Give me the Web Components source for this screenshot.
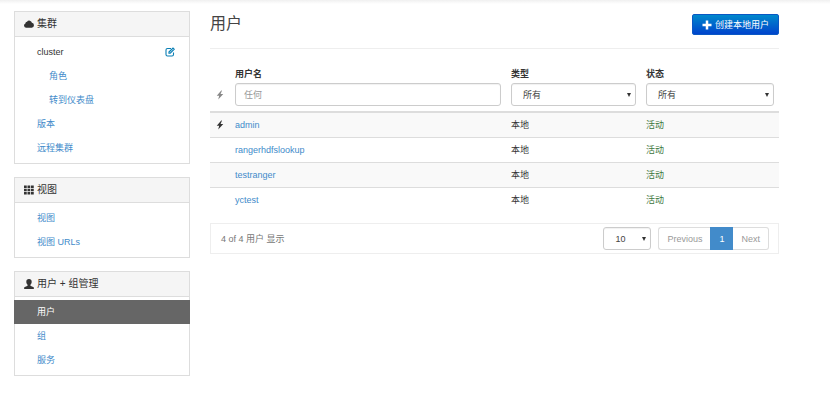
<!DOCTYPE html>
<html lang="zh-CN">
<head>
<meta charset="UTF-8">
<meta name="viewport" content="width=device-width, initial-scale=1">
<title>用户</title>
<style>
  :root {
    --link: #428bca;
    --text: #333;
    --muted: #777;
    --border: #ddd;
    --stripe: #f9f9f9;
  }
  body {
    margin: 0;
    background: #fff;
    color: var(--text);
    font: 9px/12px "Liberation Sans", "Noto Sans CJK SC", sans-serif;
  }
</style>
</head>
<body>

<admin-layout>
  <nav-panel slot="side" icon="cloud" heading="集群">
    <nav-item plain>cluster<a slot="action" href="#rename" aria-label="重命名"><app-icon name="edit"></app-icon></a></nav-item>
    <nav-item href="#roles" nested>角色</nav-item>
    <nav-item href="#dashboard" nested>转到仪表盘</nav-item>
    <nav-item href="#versions">版本</nav-item>
    <nav-item href="#remote">远程集群</nav-item>
  </nav-panel>
  <nav-panel slot="side" icon="grid" heading="视图">
    <nav-item href="#views">视图</nav-item>
    <nav-item href="#urls">视图 URLs</nav-item>
  </nav-panel>
  <nav-panel slot="side" icon="user" heading="用户 + 组管理">
    <nav-item href="#users" active>用户</nav-item>
    <nav-item href="#groups">组</nav-item>
    <nav-item href="#services">服务</nav-item>
  </nav-panel>

  <page-header>用户<create-button slot="action">创建本地用户</create-button></page-header>
  <user-table></user-table>
  <table-footer>4 of 4 用户 显示</table-footer>
</admin-layout>

<script>
// ---------- <app-icon> ----------
const ICONS = {
  cloud: '<path fill="currentColor" d="M4.500 17.500A4.300 4.300 0 0 1 2.800 9.200 3.600 3.600 0 0 1 6 5.600 5.400 5.400 0 0 1 15.800 7.600 5 5 0 0 1 15.500 17.500Z"/>',
  grid: '<path fill="currentColor" d="M0 1h5.500v5H0zM7 1h5.500v5H7zM14 1h5.500v5H14zM0 7.500h5.500v5H0zM7 7.500h5.500v5H7zM14 7.500h5.500v5H14zM0 14h5.500v5H0zM7 14h5.500v5H7zM14 14h5.500v5H14z"/>',
  user: '<path fill="currentColor" d="M10 0c3.600 0 5.400 2.200 5.400 5.400 0 2.600-1.100 4.800-2.600 6v1.300c0 .7.300 1 .9 1.300l4.700 2c.9.400 1.300.9 1.300 1.800V20H.3v-2.200c0-.9.400-1.400 1.300-1.800l4.700-2c.6-.3.900-.6.900-1.300v-1.300c-1.500-1.200-2.600-3.400-2.600-6C4.600 2.200 6.400 0 10 0z"/>',
  flash: '<path fill="currentColor" d="M12.500 1 3.500 11.300h4.800L6.500 19l10-11.200h-5.300L14 1z"/>',
  plus: '<path fill="currentColor" d="M7.500 1h5v6.500H19v5h-6.500V19h-5v-6.500H1v-5h6.500z"/>',
  edit: '<path fill="none" stroke="currentColor" stroke-width="2.200" d="M12 3H5a3 3 0 0 0-3 3v9a3 3 0 0 0 3 3h9a3 3 0 0 0 3-3v-4"/><path fill="none" stroke="currentColor" stroke-width="2.400" d="m8 10 8-8 2.500 2.500-8 8H8z"/>',
};

class AppIcon extends HTMLElement {
  connectedCallback() {
    this.attachShadow({ mode: 'open' }).innerHTML = `
      <style>
        :host { display: inline-block; width: 10px; height: 10px; }
        svg { display: block; width: 100%; height: 100%; }
      </style>
      <svg viewBox="0 0 20 20" aria-hidden="true">${ICONS[this.getAttribute('name')] || ''}</svg>
    `;
  }
}
customElements.define('app-icon', AppIcon);

// ---------- <admin-layout> ----------
class AdminLayout extends HTMLElement {
  connectedCallback() {
    this.attachShadow({ mode: 'open' }).innerHTML = `
      <style>
        :host { display: block; }
        .topbar { height: 4px; background: linear-gradient(#f0f0f0, #fff); }
        .page { display: flex; align-items: flex-start; gap: 20px; padding: 7px 51px 20px 14px; }
        aside { flex: 0 0 176px; display: flex; flex-direction: column; gap: 13px; }
        main { flex: 1; min-width: 0; padding-top: 1px; }
      </style>
      <div class="topbar"></div>
      <div class="page">
        <aside><slot name="side"></slot></aside>
        <main><slot></slot></main>
      </div>
    `;
  }
}
customElements.define('admin-layout', AdminLayout);

// ---------- <nav-panel> ----------
class NavPanel extends HTMLElement {
  connectedCallback() {
    this.attachShadow({ mode: 'open' }).innerHTML = `
      <style>
        :host { display: block; border: 1px solid var(--border); }
        .heading {
          display: flex;
          align-items: center;
          gap: 3px;
          padding: 0 9px;
          background: #f5f5f5;
          border-bottom: 1px solid var(--border);
          font-size: 10px;
          line-height: 24px;
        }
        nav { padding: 3px 0; }
      </style>
      <div class="heading"><app-icon name="${this.getAttribute('icon')}"></app-icon><span>${this.getAttribute('heading')}</span></div>
      <nav><slot></slot></nav>
    `;
  }
}
customElements.define('nav-panel', NavPanel);

// ---------- <nav-item> ----------
class NavItem extends HTMLElement {
  connectedCallback() {
    const label = this.hasAttribute('plain')
      ? '<span class="label"><slot></slot></span>'
      : `<a class="label" href="${this.getAttribute('href')}"><slot></slot></a>`;
    this.attachShadow({ mode: 'open' }).innerHTML = `
      <style>
        :host { display: flex; align-items: center; padding-right: 14px; line-height: 24px; }
        :host([active]) { background: #666; margin: 0 -1px; padding-left: 1px; }
        .label { flex: 1; padding-left: 22px; text-decoration: none; }
        a.label { color: var(--link); }
        :host([nested]) .label { padding-left: 34px; }
        :host([active]) .label { color: #fff; }
        ::slotted(a) { display: flex; color: #0a7fb5; }
      </style>
      ${label}<slot name="action"></slot>
    `;
  }
}
customElements.define('nav-item', NavItem);

// ---------- <page-header> ----------
class PageHeader extends HTMLElement {
  connectedCallback() {
    this.attachShadow({ mode: 'open' }).innerHTML = `
      <style>
        :host {
          display: flex;
          justify-content: space-between;
          align-items: flex-start;
          height: 36px;
          border-bottom: 1px solid #eee;
        }
        h1 { margin: 0; font-size: 16px; font-weight: 400; line-height: 24px; color: #444; }
        ::slotted(create-button) { margin-top: 2px; }
      </style>
      <h1><slot></slot></h1>
      <slot name="action"></slot>
    `;
  }
}
customElements.define('page-header', PageHeader);

// ---------- <create-button> ----------
class CreateButton extends HTMLElement {
  connectedCallback() {
    this.attachShadow({ mode: 'open' }).innerHTML = `
      <style>
        :host { display: block; }
        button {
          display: flex;
          align-items: center;
          gap: 3px;
          height: 21px;
          padding: 0 9px;
          border: 1px solid #0a58c4;
          border-radius: 2px;
          background: linear-gradient(#0088cc, #0044cc);
          color: #fff;
          font: inherit;
          cursor: pointer;
        }
      </style>
      <button type="button"><app-icon name="plus"></app-icon><span><slot></slot></span></button>
    `;
  }
}
customElements.define('create-button', CreateButton);

const FIELD_STYLES = `
  input, select {
    display: block;
    box-sizing: border-box;
    width: 100%;
    height: 23px;
    padding: 0 8px;
    border: 1px solid #ccc;
    border-radius: 3px;
    background: #fff;
    box-shadow: inset 0 1px 1px rgba(0,0,0,0.06);
    color: #444;
    font: inherit;
    font-weight: 400;
  }
  input::placeholder { color: #999; opacity: 1; }
  select {
    appearance: none;
    padding: 0 11px;
    background: #fff url('data:image/svg+xml,<svg xmlns="http://www.w3.org/2000/svg" width="4" height="4"><path d="M0 0h4L2 4z" fill="%23333"/></svg>') no-repeat right 4px center;
  }
`;

// ---------- <user-table> ----------
const USERS = [
  { name: 'admin', admin: true },
  { name: 'rangerhdfslookup' },
  { name: 'testranger' },
  { name: 'yctest' },
];

class UserTable extends HTMLElement {
  connectedCallback() {
    const rows = USERS.map(u => `
      <tr>
        <td class="flag">${u.admin ? '<app-icon name="flash"></app-icon>' : ''}</td>
        <td><a href="#users/${u.name}">${u.name}</a></td>
        <td>本地</td>
        <td class="ok">活动</td>
      </tr>`).join('');
    this.attachShadow({ mode: 'open' }).innerHTML = `
      <style>
        ${FIELD_STYLES}
        :host { display: block; margin-top: 18px; }
        table { width: 100%; table-layout: fixed; border-spacing: 0; }
        .c-flag { width: 20px; }
        .c-type { width: 135px; }
        .c-status { width: 138px; }
        th { padding: 0 5px 5px; text-align: left; vertical-align: bottom; border-bottom: 2px solid var(--border); }
        label { display: block; padding-bottom: 1px; line-height: 15px; }
        .flag { padding-left: 5px; padding-right: 0; }
        th.flag { color: #888; padding-bottom: 11px; }
        app-icon { display: block; }
        td { height: 14px; padding: 5px; line-height: 14px; border-top: 1px solid var(--border); }
        tbody tr:first-child td { border-top: 0; }
        tbody tr:nth-child(odd) { background: var(--stripe); }
        a { color: var(--link); text-decoration: none; }
        .ok { color: #3c763d; }
      </style>
      <table>
        <colgroup><col class="c-flag"><col><col class="c-type"><col class="c-status"></colgroup>
        <thead>
          <tr>
            <th class="flag"><app-icon name="flash"></app-icon></th>
            <th><label for="name">用户名</label><input id="name" type="text" placeholder="任何"></th>
            <th><label for="type">类型</label><select id="type"><option>所有</option></select></th>
            <th><label for="status">状态</label><select id="status"><option>所有</option></select></th>
          </tr>
        </thead>
        <tbody>${rows}</tbody>
      </table>
    `;
  }
}
customElements.define('user-table', UserTable);

// ---------- <table-footer> ----------
class TableFooter extends HTMLElement {
  connectedCallback() {
    this.attachShadow({ mode: 'open' }).innerHTML = `
      <style>
        ${FIELD_STYLES}
        :host {
          display: flex;
          align-items: center;
          gap: 7px;
          margin-top: 11px;
          padding: 3px 9px 3px 10px;
          border: 1px solid #eee;
          color: var(--muted);
        }
        .info { flex: 1; }
        select { width: 48px; }
        .pages { display: flex; }
        button {
          height: 23px;
          padding: 0 8px;
          border: 1px solid var(--border);
          background: #fff;
          color: #999;
          font: inherit;
        }
        button:first-child { border-right: 0; border-radius: 3px 0 0 3px; }
        button:last-child { border-left: 0; border-radius: 0 3px 3px 0; }
        .current { background: var(--link); border-color: var(--link); color: #fff; }
      </style>
      <span class="info"><slot></slot></span>
      <select aria-label="每页"><option>10</option></select>
      <div class="pages">
        <button type="button">Previous</button>
        <button type="button" class="current">1</button>
        <button type="button">Next</button>
      </div>
    `;
  }
}
customElements.define('table-footer', TableFooter);
</script>
</body>
</html>
